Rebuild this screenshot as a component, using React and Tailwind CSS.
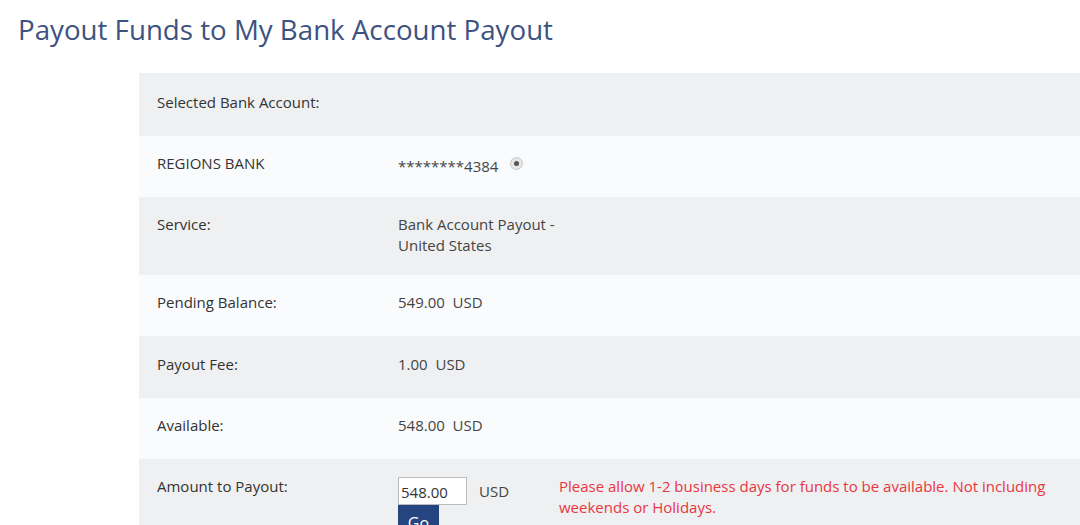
export default function App() {
  const rows = [
    { label: 'Pending Balance:', value: '549.00\u00a0 USD', h: 'h-[61px]', bg: 'bg-[#fafbfc]' },
    { label: 'Payout Fee:', value: '1.00\u00a0 USD', h: 'h-[62px]', bg: 'bg-[#eff0f1]' },
    { label: 'Available:', value: '548.00\u00a0 USD', h: 'h-[61px]', bg: 'bg-[#fafbfc]' },
  ];

  return (
    <div className="w-[1080px] h-[525px] overflow-hidden bg-white font-['Open_Sans',sans-serif] text-[15px] leading-[21px]">
      <h1 className="pl-[18px] pt-[11px] text-[27.7px] leading-[36px] text-[#3d5280]">
        Payout Funds to My Bank Account Payout
      </h1>

      <div className="ml-[139px] mt-[26px]">
        <div className="flex items-center h-[63px] bg-[#eff0f1] pl-[18px] pb-[4px] text-[#333]">
          Selected Bank Account:
        </div>

        <div className="flex items-center h-[61px] bg-[#fafbfc] pl-[18px] pb-[6px] text-[#333]">
          <div className="w-[241px]">REGIONS BANK</div>
          <div className="flex items-center text-[#444]">
            <span className="pt-[6px]">********4384</span>
            <span className="ml-[12px] flex items-center justify-center w-[13px] h-[13px] rounded-full border border-[#c8c8c8] bg-[#e6e6e6]">
              <span className="w-[5px] h-[5px] rounded-full bg-[#555]" />
            </span>
          </div>
        </div>

        <div className="flex items-start h-[78px] bg-[#eff0f1] pl-[18px] pt-[17px] text-[#333]">
          <div className="w-[241px]">Service:</div>
          <div className="text-[#444]">
            Bank Account Payout -<br />United States
          </div>
        </div>

        {rows.map((r) => (
          <div key={r.label} className={`flex items-center ${r.h} ${r.bg} pl-[18px] pb-[6px] text-[#333]`}>
            <div className="w-[241px]">{r.label}</div>
            <div className="text-[#444]">{r.value}</div>
          </div>
        ))}

        <div className="flex items-start h-[80px] bg-[#eff0f1] pl-[18px] pt-[17px] text-[#333]">
          <div className="w-[241px]">Amount to Payout:</div>
          <div className="flex flex-col w-[161px] pt-[1px]">
            <div className="flex items-center">
              <input
                defaultValue="548.00"
                className="w-[69px] h-[28px] border border-[#bbb] bg-white px-[2px] pt-[2px] text-[15px] text-[#333] outline-none font-['Open_Sans',sans-serif]"
              />
              <span className="ml-[12px] text-[#444]">USD</span>
            </div>
            <button className="w-[41px] h-[24px] bg-[#24457f] text-white text-[16px] leading-[24px] pt-[6px]">Go</button>
          </div>
          <div className="text-[#e8373f] w-[500px]">
            Please allow 1-2 business days for funds to be available. Not including weekends or Holidays.
          </div>
        </div>
      </div>
    </div>
  );
}
